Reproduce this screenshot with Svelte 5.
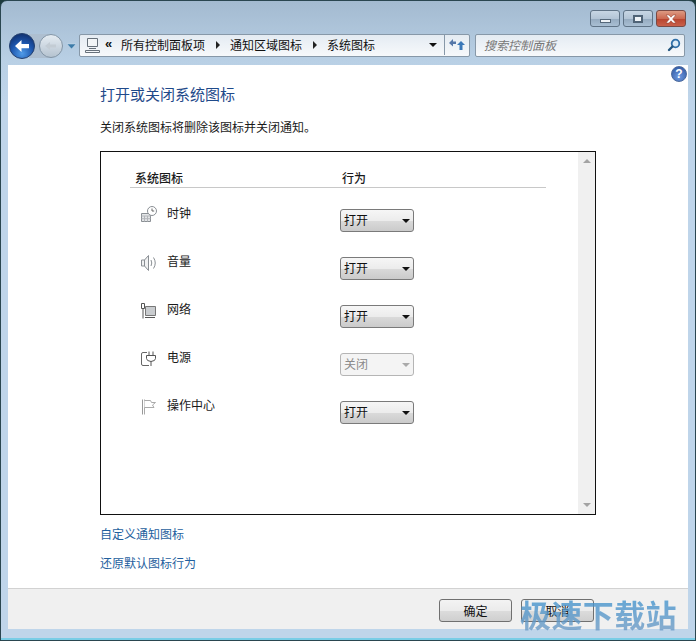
<script lang="ts">
	const crumbs = ['所有控制面板项', '通知区域图标', '系统图标'];
	const rows = [
		{ id: 'clock', label: '时钟', value: '打开', disabled: false },
		{ id: 'volume', label: '音量', value: '打开', disabled: false },
		{ id: 'network', label: '网络', value: '打开', disabled: false },
		{ id: 'power', label: '电源', value: '关闭', disabled: true },
		{ id: 'flag', label: '操作中心', value: '打开', disabled: false }
	];
</script>

<div class="window">
	<div class="chrome">
		<div class="caption">
			<button class="cap min" aria-label="最小化"><span class="min-glyph"></span></button>
			<button class="cap max" aria-label="最大化"><span class="max-glyph"></span></button>
			<button class="cap close" aria-label="关闭">
				<svg width="14" height="10" viewBox="0 0 14 10">
					<path d="M2 1h3l2 2.2L9 1h3L8.6 5 12 9H9L7 6.8 5 9H2l3.4-4z" fill="#fff" stroke="#8a3a2a" stroke-width=".5" />
				</svg>
			</button>
		</div>
		<div class="navbar">
			<div class="nav-buttons">
				<svg width="70" height="30" viewBox="0 0 70 30">
					<defs>
						<radialGradient id="back" cx=".5" cy=".8" r=".8">
							<stop offset="0" stop-color="#4f9be8" />
							<stop offset=".55" stop-color="#1d56ad" />
							<stop offset="1" stop-color="#10306f" />
						</radialGradient>
						<linearGradient id="fwd" x1="0" y1="0" x2="0" y2="1">
							<stop offset="0" stop-color="#e6edf3" />
							<stop offset="1" stop-color="#b4c2cf" />
						</linearGradient>
					</defs>
					<path d="M20 3h22v24H20z" fill="#aebfd0" />
					<circle cx="42" cy="15" r="11.500" fill="url(#fwd)" stroke="#8295a6" />
					<path d="M36 15l5-4v2.500h6v3h-6V19z" fill="#c3ccd4" />
					<circle cx="13" cy="15" r="12.500" fill="url(#back)" stroke="#24406e" />
					<path d="M6 15l6.500-6v4h7.500v4.200h-7.500V21z" fill="#fff" />
					<path d="M58 13h9l-4.500 5z" fill="#3d7ba8" stroke="#cfe0ee" stroke-width=".5" />
				</svg>
			</div>
			<div class="address">
				<svg class="pc" width="17" height="16" viewBox="0 0 17 16" fill="none" stroke="#66707a">
					<path d="M3.500 1.500h10v8h-10z" fill="#f2f5f7" />
					<path d="M5 11.500h7M1.500 13.500h14v2h-14z" />
				</svg>
				<span class="chev">«</span>
				{#each crumbs as crumb, i}
					<span class="crumb">{crumb}</span>
					{#if i < crumbs.length - 1}<span class="sep"></span>{/if}
				{/each}
				<span class="grow"></span>
				<span class="drop"></span>
				<span class="refresh">
					<svg width="18" height="16" viewBox="0 0 18 16">
						<path d="M1 6l4-4v2.500h3V7H5v2.500z" fill="#5577a8" />
						<path d="M17 8l-4-4-4 4h2.500v5H14.500V8z" fill="#3b78b8" />
					</svg>
				</span>
			</div>
			<div class="search">
				<span class="placeholder">搜索控制面板</span>
				<svg width="14" height="14" viewBox="0 0 14 14" fill="none">
					<circle cx="8.500" cy="5.500" r="3.800" stroke="#2f6fa8" stroke-width="1.800" fill="#dcebf6" />
					<path d="M5.500 8.500L2 12" stroke="#24567f" stroke-width="2.400" stroke-linecap="round" />
				</svg>
			</div>
		</div>
	</div>

	<div class="content">
		<div class="main">
			<div class="help-row">
				<span class="help">?</span>
			</div>
			<h1>打开或关闭系统图标</h1>
			<p class="desc">关闭系统图标将删除该图标并关闭通知。</p>

			<div class="listbox">
				<div class="list-inner">
					<div class="list-head">
						<span class="col-name">系统图标</span>
						<span>行为</span>
					</div>
					{#each rows as row (row.id)}
						<div class="row">
							<span class="row-icon">
								<svg width="18" height="18" viewBox="0 0 18 18" fill="none" stroke="#8a8f94">
									{#if row.id === 'clock'}
										<path d="M1.500 7.500h9v8h-9z" fill="#e4e6e8" />
										<path d="M1.500 10h9M4.500 10v5.500M7.500 10v5.500M1.500 12.700h9" stroke="#b3b6ba" />
										<circle cx="12" cy="5" r="4.500" fill="#fff" />
										<path d="M12 2.500V5h2.200" stroke="#666" />
									{:else if row.id === 'volume'}
										<path d="M1.500 6v6h3V6zM4.500 6l4-4.500v15l-4-4.500" fill="#f0f1f2" />
										<path d="M11 6q1.500 3 0 6M13.500 3.500q3.500 5.500 0 11" />
									{:else if row.id === 'network'}
										<path d="M5.500 4.500h10v9h-10z" fill="#c9cccf" stroke="#777" />
										<path d="M1.500 1.500h3v5h-3zM3 6.500v10M5 15.500h10" stroke="#555" />
									{:else if row.id === 'power'}
										<path d="M7 2.500H3q-1.500 0-1.500 1.500v10q0 1.500 1.500 1.500h6" stroke="#666" />
										<path d="M6.500 5.500h9v3q0 2.500-4.500 3q-4.500-.5-4.500-3zM9 5V1.500M13 5V1.500M11 11.500V16" stroke="#555" fill="#fff" />
									{:else}
										<path d="M2.500 1.500v15" stroke="#999" />
										<path d="M4.500 1.500v15" stroke="#aaa" />
										<path d="M4.500 2.500h6l1 2h4l-3 2.500 1.500 2.500h-9.500" fill="#fff" stroke="#aaa" />
									{/if}
								</svg>
							</span>
							<span class="row-label">{row.label}</span>
							<button class="combo" class:disabled={row.disabled}>
								<span class="combo-value">{row.value}</span>
								<span class="combo-arrow"></span>
							</button>
						</div>
					{/each}
				</div>
				<div class="scrollbar">
					<span class="sb-up"></span>
					<span class="sb-down"></span>
				</div>
			</div>

			<a class="link first" href="#custom">自定义通知图标</a>
			<a class="link" href="#restore">还原默认图标行为</a>
		</div>
		<div class="footer">
			<button class="btn">确定</button>
			<button class="btn">取消</button>
		</div>
	</div>
	<span class="watermark">极速下载站</span>
</div>

<style>
	:global(body) {
		margin: 0;
		background: #1d3a3c;
	}

	.window {
		position: relative;
		box-sizing: border-box;
		width: 696px;
		height: 641px;
		padding: 1px 7px 0;
		display: flex;
		flex-direction: column;
		border-radius: 7px 7px 0 0;
		border: 1px solid #2a4650;
		background: linear-gradient(#a3bad0 0, #b9d0e5 60px, #bfd5ea 100px);
		box-shadow: inset 0 -2px 0 #79cde6;
		font-family: 'Noto Sans CJK SC', sans-serif;
		font-size: 12px;
		color: #1a1a1a;
	}

	.chrome {
		height: 63px;
		flex-shrink: 0;
	}

	.caption {
		display: flex;
		justify-content: flex-end;
		gap: 3px;
		padding: 8px 2px 0 0;
		height: 18px;
	}

	.cap {
		width: 30px;
		height: 17px;
		padding: 0;
		display: flex;
		align-items: center;
		justify-content: center;
		border: 1px solid #5f7386;
		border-radius: 3px;
		background: linear-gradient(#c7d6e4, #b3c5d6 50%, #94aabf 52%, #a9bfd3);
	}

	.close {
		background: linear-gradient(#dd9a82, #cc6a52 50%, #b8442e 52%, #c9604a);
		border-color: #7a4a44;
	}

	.min-glyph {
		display: block;
		width: 9px;
		height: 2px;
		margin-top: 5px;
		background: #eef3f7;
		border: 1px solid #55687a;
	}

	.max-glyph {
		display: block;
		box-sizing: border-box;
		width: 10px;
		height: 8px;
		border: 2px solid #4f6376;
		background: #eef3f7;
	}

	.navbar {
		display: flex;
		align-items: center;
		margin-top: 5px;
		height: 23px;
	}

	.nav-buttons {
		width: 70px;
		margin-left: 1px;
		flex-shrink: 0;
		height: 24px;
		display: flex;
		align-items: center;
		padding-top: 2px;
	}

	.address {
		box-sizing: border-box;
		width: 391px;
		height: 23px;
		margin-top: 1px;
		display: flex;
		align-items: center;
		padding: 0 0 1px 4px;
		border: 1px solid #8798a8;
		border-radius: 2px;
		background: linear-gradient(#e4ebf2, #f7f9fb);
		font-size: 12px;
		color: #111;
	}

	.pc {
		flex-shrink: 0;
	}

	.chev {
		margin: -2px 0 0 4px;
		font-family: 'Liberation Sans', sans-serif;
		font-size: 13px;
		font-weight: bold;
		width: 16px;
	}

	.sep {
		width: 0;
		height: 0;
		margin: 0 10px 0 11px;
		border-left: 4px solid #222;
		border-top: 4px solid transparent;
		border-bottom: 4px solid transparent;
	}

	.grow {
		flex: 1;
	}

	.drop {
		width: 0;
		height: 0;
		margin-right: 7px;
		border-top: 4px solid #111;
		border-left: 4px solid transparent;
		border-right: 4px solid transparent;
	}

	.refresh {
		box-sizing: border-box;
		width: 25px;
		height: 21px;
		display: flex;
		align-items: center;
		justify-content: center;
		border-left: 1px solid #8798a8;
	}

	.search {
		box-sizing: border-box;
		width: 210px;
		height: 23px;
		margin: 1px 0 0 5px;
		padding: 0 3px 1px 8px;
		display: flex;
		align-items: center;
		justify-content: space-between;
		border: 1px solid #8798a8;
		border-radius: 2px;
		background: linear-gradient(#e4ebf2, #f7f9fb);
	}

	.placeholder {
		color: #777;
		font-style: italic;
		font-size: 12px;
	}

	.content {
		flex: 1;
		display: flex;
		flex-direction: column;
		margin-bottom: 11px;
		background: #fff;
		min-height: 0;
	}

	.main {
		flex: 1;
		padding-left: 92px;
	}

	.help-row {
		display: flex;
		justify-content: flex-end;
		padding: 1px 1px 0 0;
		height: 16px;
	}

	.help {
		box-sizing: border-box;
		width: 16px;
		height: 16px;
		line-height: 14px;
		text-align: center;
		border-radius: 50%;
		border: 1px solid #4c6a9c;
		background: radial-gradient(circle at 50% 70%, #6f9ae0, #27509b);
		color: #fff;
		font-family: 'Liberation Sans', sans-serif;
		font-size: 12px;
		font-weight: bold;
	}

	h1 {
		margin: 1px 0 0;
		font-size: 15px;
		line-height: 22px;
		font-weight: 400;
		color: #1f4a8a;
	}

	.desc {
		margin: 13px 0 0;
		line-height: 18px;
		font-size: 12px;
	}

	.listbox {
		box-sizing: border-box;
		display: flex;
		width: 496px;
		height: 364px;
		margin-top: 15px;
		border: 1px solid #111;
	}

	.list-inner {
		flex: 1;
		padding: 17px 32px 0 29px;
	}

	.list-head {
		display: flex;
		height: 18px;
		line-height: 17px;
		padding-left: 5px;
		border-bottom: 1px solid #c8c8c8;
		font-weight: 500;
	}

	.col-name {
		width: 207px;
	}

	.row {
		display: flex;
		height: 48px;
		padding-left: 10px;
	}

	.list-head + .row {
		margin-top: 14px;
	}

	.row-icon {
		width: 27px;
		height: 18px;
		margin-top: 4px;
	}

	.row-label {
		width: 173px;
		line-height: 18px;
		margin-top: 2px;
	}

	.combo {
		box-sizing: border-box;
		width: 74px;
		height: 23px;
		margin-top: 7px;
		padding: 0 3px;
		display: flex;
		align-items: center;
		justify-content: space-between;
		border: 1px solid #7a7a7a;
		border-radius: 3px;
		background: linear-gradient(#f6f6f6, #ececec 50%, #dadada 52%, #cbcbcb);
		font: inherit;
		color: #111;
	}

	.combo-value {
		margin-top: -2px;
	}

	.combo-arrow {
		width: 0;
		height: 0;
		border-top: 4px solid #111;
		border-left: 4px solid transparent;
		border-right: 4px solid transparent;
	}

	.combo.disabled {
		border-color: #b5b5b5;
		background: #f4f4f4;
		color: #8a8a8a;
	}

	.combo.disabled .combo-arrow {
		border-top-color: #aaa;
	}

	.scrollbar {
		width: 17px;
		flex-shrink: 0;
		display: flex;
		flex-direction: column;
		justify-content: space-between;
		align-items: center;
		padding: 7px 0;
		box-sizing: border-box;
		background: #f0f0f0;
	}

	.sb-up,
	.sb-down {
		width: 0;
		height: 0;
		border-left: 4px solid transparent;
		border-right: 4px solid transparent;
	}

	.sb-up {
		border-bottom: 4px solid #a3a3a3;
	}

	.sb-down {
		border-top: 4px solid #a3a3a3;
	}

	.link {
		display: block;
		margin-top: 11px;
		line-height: 18px;
		color: #1f5f9e;
		text-decoration: none;
	}

	.link.first {
		margin-top: 10px;
	}

	.footer {
		box-sizing: border-box;
		height: 41px;
		display: flex;
		justify-content: flex-end;
		gap: 9px;
		padding: 10px 94px 0 0;
		background: #f0f0f0;
		border-top: 1px solid #d2d2d2;
	}

	.btn {
		box-sizing: border-box;
		width: 73px;
		height: 23px;
		padding: 0;
		border: 1px solid #707070;
		border-radius: 3px;
		background: linear-gradient(#f3f3f3, #ebebeb 50%, #dcdcdc 52%, #cfcfcf);
		font: inherit;
		color: #111;
	}

	.watermark {
		position: absolute;
		left: 519px;
		bottom: 8px;
		font-size: 31px;
		line-height: 36px;
		font-weight: 700;
		letter-spacing: 0.4px;
		white-space: nowrap;
		opacity: 0.8;
		color: #4f90c8;
		background: linear-gradient(#3f93cf, #6f9cc6);
		-webkit-background-clip: text;
		background-clip: text;
		-webkit-text-fill-color: transparent;
	}
</style>
